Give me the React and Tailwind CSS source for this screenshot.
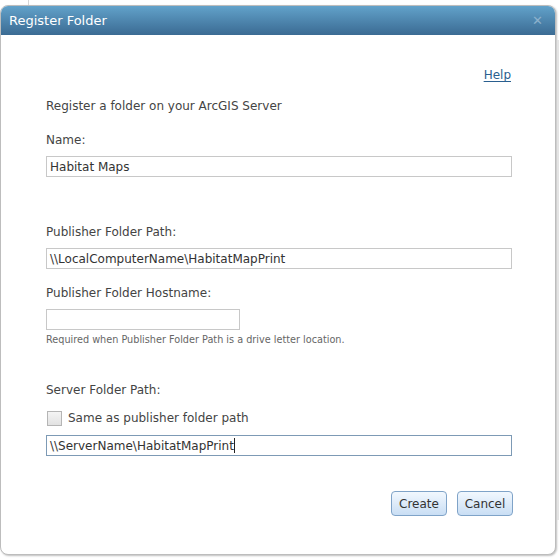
import React from 'react';

const font = { fontFamily: '"DejaVu Sans", Verdana, sans-serif' };

const TextField = ({ value, wide = true, focused = false }) => (
  <div
    className={`h-[21px] border flex items-center px-[3px] text-[12px] text-[#333] bg-white ${
      wide ? 'w-[466px]' : 'w-[194px]'
    } ${focused ? 'border-[#7d9ab5]' : 'border-[#c8c8c8]'}`}
  >
    <span>{value}</span>
    {focused && <span className="w-px h-[15px] bg-[#222]" />}
  </div>
);

const Button = ({ children }) => (
  <button className="h-[25px] w-[56px] rounded-[4px] border border-[#7fa3c8] bg-gradient-to-b from-[#f2f8fe] to-[#c9def4] text-[12px] text-[#333]">
    {children}
  </button>
);

export default function App() {
  return (
    <div className="w-[559px] h-[558px] bg-white pt-[5px] relative" style={font}>
      {/* bits of the page underneath */}
      <div className="absolute left-[28px] top-0 w-px h-[5px] bg-[#d6d6d6]" />
      <div className="absolute right-0 top-[40px] w-[2px] h-[480px] bg-[#e4e4e4]" />

      <div className="w-[556px] h-[550px] rounded-t-[8px] rounded-b-[8px] border border-[#bdbdbd] shadow-[1px_1px_2px_rgba(0,0,0,0.25)] bg-white flex flex-col overflow-hidden">
        {/* title bar */}
        <div className="h-[29px] shrink-0 bg-gradient-to-b from-[#62a2ca] to-[#3b6b93] flex items-center justify-between pl-[8px] pr-[12px]">
          <span className="text-white text-[13px] font-normal">Register Folder</span>
          <span className="text-[#8cb1cc] text-[13px] font-bold leading-none">✕</span>
        </div>

        <div className="flex flex-col pl-[45px] pr-[42px] text-[12px] text-[#444]">
          <div className="flex justify-end mt-[32px] pr-[2px]">
            <a className="text-[#2a5f8f] underline underline-offset-2 leading-[16px]">Help</a>
          </div>

          <p className="mt-[15px] leading-[16px]">Register a folder on your ArcGIS Server</p>

          <p className="mt-[18px] leading-[16px]">Name:</p>
          <div className="mt-[8px]">
            <TextField value="Habitat Maps" />
          </div>

          <p className="mt-[47px] leading-[16px]">Publisher Folder Path:</p>
          <div className="mt-[8px]">
            <TextField value="\\LocalComputerName\HabitatMapPrint" />
          </div>

          <p className="mt-[16px] leading-[16px]">Publisher Folder Hostname:</p>
          <div className="mt-[8px]">
            <TextField value="" wide={false} />
          </div>
          <p className="mt-[3px] text-[9.7px] text-[#666] leading-[13px]">
            Required when Publisher Folder Path is a drive letter location.
          </p>

          <p className="mt-[36px] leading-[16px]">Server Folder Path:</p>
          <label className="mt-[12px] flex items-center gap-[6px]">
            <span className="w-[15px] h-[15px] ml-[1px] border border-[#b5b5b5] bg-gradient-to-b from-[#f4f4f4] to-[#e2e2e2]" />
            <span className="leading-[16px]">Same as publisher folder path</span>
          </label>
          <div className="mt-[9px]">
            <TextField value="\\ServerName\HabitatMapPrint" focused />
          </div>

          <div className="flex justify-end gap-[10px] mt-[35px]">
            <Button>Create</Button>
            <Button>Cancel</Button>
          </div>
        </div>
      </div>
    </div>
  );
}
